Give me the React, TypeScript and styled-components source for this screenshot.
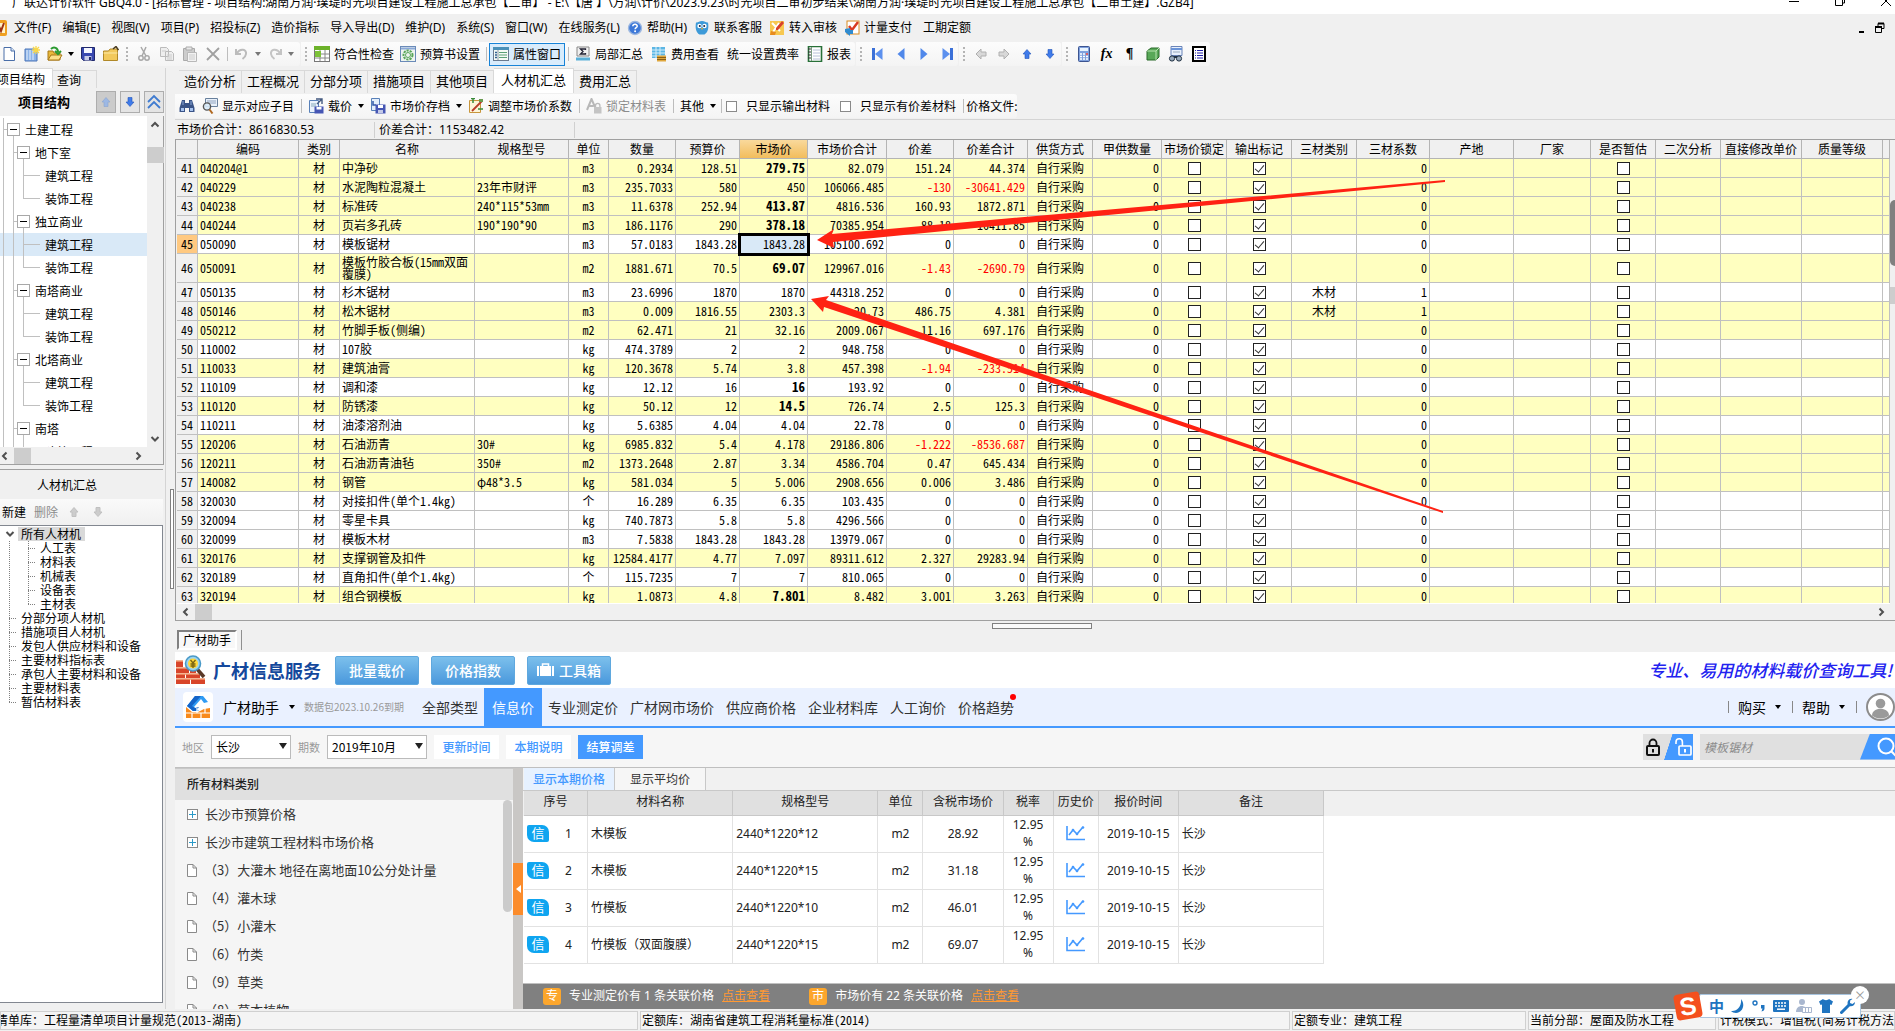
import React from 'react';
import styled, { createGlobalStyle, css } from 'styled-components';

const SANS = '"Noto Sans", "Noto Sans CJK SC", sans-serif';
const CJK = '"Noto Sans CJK SC", sans-serif';
const MONO = '"Noto Sans Mono CJK SC", "Noto Sans CJK SC", sans-serif';

const Global = createGlobalStyle`
  * { box-sizing: border-box; }
  html, body { margin: 0; height: 100%; overflow: hidden; }
  body { background: #f0f0f0; color: #000; font: 12px/16px ${CJK}; }
  button, input, select { font: inherit; color: inherit; margin: 0; padding: 0; border: 0; border-radius: 0; background: none; }
  button { white-space: nowrap; }
  ul { list-style: none; margin: 0; padding: 0; }
  svg { display: block; flex: none; }
`;

/* ---------- icons ---------- */
const Svg = ({ children, w = 16, h = 16, box }: { children: React.ReactNode; w?: number; h?: number; box?: string }) => (
  <svg width={w} height={h} viewBox={box || `0 0 ${w} ${h}`} aria-hidden="true">{children}</svg>
);

const I: Record<string, React.ReactNode> = {
  app: <Svg><rect x="0" y="0" width="15" height="16" rx="2" fill="#f0a020" /><path d="M2 3h11v10H2z" fill="#fff3c8" /><path d="M3 12l3-8 3 7 3-8" stroke="#a03010" strokeWidth="2" fill="none" /></Svg>,
  help: <Svg><circle cx="8" cy="8" r="6.5" fill="#3c78d8" stroke="#9db8e0" strokeWidth="1.4" /><path d="M5.8 6.2c.2-2.6 4.6-2.4 4.4 0-.1 1.400-2.100 1.500-2.100 3" stroke="#fff" strokeWidth="1.5" fill="none" /><circle cx="8.100" cy="11.300" r="1" fill="#fff" /></Svg>,
  owl: <Svg><path d="M2 2.500c2 .5 3-1.500 6-1.500s4 2 6 1.500c1 5 0 10-3.500 12h-5C2 12.500 1 8 2 2.500z" fill="#3d9ad8" /><circle cx="5.500" cy="6" r="2.200" fill="#fff" /><circle cx="10.500" cy="6" r="2.200" fill="#fff" /><circle cx="5.800" cy="6" r="1" fill="#124" /><circle cx="10.200" cy="6" r="1" fill="#124" /><path d="M7 8h2l-1 2z" fill="#f6b21b" /></Svg>,
  audit: <Svg><rect x="1" y="1" width="14" height="14" fill="#f7c850" /><path d="M3 3l8 8M10 3l-6 9" stroke="#fff" strokeWidth="2" /><path d="M13 1l2 2-6 7-2 0 0-2z" fill="#d8402a" /><path d="M2 11l5 1-1 3H1z" fill="#e88c20" /></Svg>,
  pay: <Svg><rect x="3" y="1" width="12" height="13" fill="#fff" stroke="#d98a20" /><path d="M5 6l3 4 6-8" stroke="#d83a20" strokeWidth="2.400" fill="none" /><path d="M1 9l5-1v2h3v4H6v2l-5-4z" fill="#2f8bd0" /></Svg>,
  newFile: <Svg><path d="M3 1.500h7l3.500 3.500v9.500H3z" fill="#fff" stroke="#4a6ea8" /><path d="M10 1.500V5h3.500" fill="#dbe8f8" stroke="#4a6ea8" /></Svg>,
  book: <Svg><path d="M1 3h12v12H1z" fill="#8db4e8" stroke="#4a74b8" /><path d="M3 4v10M6 4v10M9 4v10" stroke="#e8f1fc" /><path d="M12 0v8M8 4h8M9 1l6 6M15 1L9 7" stroke="#f8d84a" strokeWidth="1.300" /></Svg>,
  open: <Svg><path d="M1 14V5h5l1 2h6v7z" fill="#e8b83a" stroke="#a87818" /><path d="M1 14l3-5h11l-3 5z" fill="#fbe08a" stroke="#a87818" /><path d="M4 3c3-3 7-1 7 3M8 5l3 3 3-3" stroke="#2a9a30" strokeWidth="2" fill="none" /></Svg>,
  save: <Svg><path d="M1.500 1.500h13v13h-11l-2-2z" fill="#3848b0" stroke="#20286c" /><path d="M4 2h8v5H4z" fill="#f4f6ff" /><path d="M4.500 10h7v4.500h-7z" fill="#c8cce8" /><path d="M9 11h2v3H9z" fill="#20286c" /></Svg>,
  folderUp: <Svg><path d="M.5 14.500V5h5l1.500-2h7.500v11.500z" fill="#f2c95c" stroke="#b08828" /><path d="M.5 7h14" stroke="#fbe9a8" /><path d="M10 3l3-2.500 2.500 3.500" stroke="#4a3c20" strokeWidth="1.500" fill="none" /></Svg>,
  cut: <Svg><path d="M5 1l5 9M10 1L6 10" stroke="#a8a8a8" strokeWidth="1.500" /><circle cx="5" cy="12" r="2.200" fill="none" stroke="#a8a8a8" strokeWidth="1.500" /><circle cx="11" cy="12" r="2.200" fill="none" stroke="#a8a8a8" strokeWidth="1.500" /></Svg>,
  copy: <Svg><path d="M1.500 1.500h6l2 2v7h-8zM6.500 5.500h6l2 2v7h-8z" fill="#eee" stroke="#bbb" /><path d="M8 9h5M8 11h5M8 13h5M3 5h4" stroke="#ccc" /></Svg>,
  paste: <Svg><path d="M1.500 2.500h11v12h-11z" fill="#ccc" stroke="#aaa" /><path d="M4 1h6v3H4z" fill="#e8e8e8" stroke="#aaa" /><path d="M5.500 6.500h9v9h-9z" fill="#f2f2f2" stroke="#b8b8b8" /><path d="M7 9h6M7 11h6M7 13h6" stroke="#ccc" /></Svg>,
  del: <Svg><path d="M2 2l12 12M14 2L2 14" stroke="#a0a0a0" strokeWidth="1.800" /></Svg>,
  undo: <Svg><path d="M2 3v5h5M3 7c3-5 10-4 9 1-.3 2.500-2 4-3.500 5" stroke="#bcbcbc" strokeWidth="2" fill="none" /></Svg>,
  redo: <Svg><path d="M14 3v5H9M13 7c-3-5-10-4-9 1 .3 2.500 2 4 3.500 5" stroke="#c4c4c4" strokeWidth="2" fill="none" /></Svg>,
  check: <Svg><rect x="0.500" y="0.500" width="15" height="15" fill="#fff" stroke="#777" /><path d="M0 0h16v4H0z" fill="#6cb22a" /><path d="M1 8h14M1 12h14M6 4v11M11 4v11" stroke="#888" /><path d="M1 5h6v6H1z" fill="#7cc238" /></Svg>,
  gear: <Svg><rect x="0.500" y="0.500" width="15" height="15" fill="#eef4f0" stroke="#6a8ab8" /><path d="M1 2.500h14" stroke="#8aa8d8" strokeWidth="2" /><circle cx="8" cy="9" r="4.500" fill="none" stroke="#59a659" strokeWidth="2" strokeDasharray="2.200 1" /><circle cx="8" cy="9" r="2.500" fill="none" stroke="#59a659" /></Svg>,
  props: <Svg><rect x="0.500" y="1.500" width="15" height="13" fill="#f4faf6" stroke="#6a7a90" /><path d="M0 1h16v3H0z" fill="#4a90b8" /><path d="M2 6.500h2M2 9h2M2 11.500h2" stroke="#306090" strokeWidth="1.500" /><path d="M6 6.500h8M6 9h8M6 11.500h8" stroke="#5aa078" /><path d="M5 4v10" stroke="#8a98a8" /></Svg>,
  sigma: <Svg><path d="M2 1h12v9H2z" fill="#f0f0f0" stroke="#888" /><path d="M10.500 4V3h-5l2.500 2.500L5.500 8h5V7" stroke="#223" strokeWidth="1.300" fill="none" /><path d="M1 13h14" stroke="#5ab0d8" strokeWidth="3" /></Svg>,
  cost: <Svg><path d="M1 1h13v11H1z" fill="#5cb6e4" /><path d="M1 4h13M1 7h13M1 10h13M5 1v11M9 1v11" stroke="#d4eefa" /><path d="M6 9.500h9v6H6z" fill="#dfa63c" /><path d="M6 11.500h9M6 13.500h9" stroke="#8a6018" /></Svg>,
  report: <Svg><path d="M1.500.5h13v15h-13z" fill="#fff" stroke="#287038" strokeWidth="1.600" /><path d="M4.500 1v14" stroke="#7a9a80" /><path d="M6 4h7M6 7h7M6 10h7M6 13h7" stroke="#b8c0d8" /><path d="M1 3h3M1 6h3M1 9h3M1 12h3" stroke="#333" /></Svg>,
  first: <Svg><path d="M3.500 2v12" stroke="#3b70d8" strokeWidth="3" /><path d="M12.500 2L5 8l7.500 6z" fill="#5c90ee" /></Svg>,
  prev: <Svg><path d="M11.500 2L4.500 8l7 6z" fill="#5088ea" /></Svg>,
  next: <Svg><path d="M4.500 2l7 6-7 6z" fill="#5088ea" /></Svg>,
  last: <Svg><path d="M12.500 2v12" stroke="#3b70d8" strokeWidth="3" /><path d="M3.500 2L11 8l-7.500 6z" fill="#5c90ee" /></Svg>,
  left: <Svg><path d="M8 3v3h5v4H8v3L3 8z" fill="#d8d8d8" stroke="#b0b0b0" /></Svg>,
  right: <Svg><path d="M8 3v3H3v4h5v3l5-5z" fill="#d8d8d8" stroke="#b0b0b0" /></Svg>,
  up: <Svg><path d="M8 3.500l4 4.500H10v4.500H6V8H4z" fill="#3f7bea" stroke="#2456b8" strokeWidth="0.600" /></Svg>,
  down: <Svg><path d="M8 12.500L4 8h2V3.500h4V8h2z" fill="#3f7bea" stroke="#2456b8" strokeWidth="0.600" /></Svg>,
  upPale: <Svg><path d="M8 3.500l4 4.500H10v4.500H6V8H4z" fill="#9db8e4" stroke="#8aa4d0" strokeWidth="0.600" /></Svg>,
  upGray: <Svg><path d="M8 3.500l4 4.500H10v4.500H6V8H4z" fill="#ccc" stroke="#c0c0c0" /></Svg>,
  downGray: <Svg><path d="M8 12.500L4 8h2V3.500h4V8h2z" fill="#ccc" stroke="#c0c0c0" /></Svg>,
  dblUp: <Svg><path d="M2 8l6-6 6 6M2 14l6-6 6 6" stroke="#3f7bd0" strokeWidth="1.800" fill="none" /></Svg>,
  calc: <Svg><rect x="2.500" y="0.500" width="11" height="15" rx="1" fill="#7fa0dc" stroke="#3c5490" /><path d="M4 2h8v3H4z" fill="#e8f4ff" /><path d="M4 8h8M4 10.500h8M4 13h8" stroke="#fff" strokeWidth="1.500" strokeDasharray="2 1" /><path d="M10 8h2" stroke="#d33" strokeWidth="1.500" /></Svg>,
  cube: <Svg><path d="M2 5l4-3h8v9l-3 3H2z" fill="#58a858" stroke="#2a6a2a" /><path d="M2 5h9l3-3M11 5v9" stroke="#b8e4b0" fill="none" /></Svg>,
  find: <Svg><path d="M3 .5h11v9H3z" fill="#e8f0fc" stroke="#6a84b8" /><path d="M3 3h11" stroke="#6a94d8" strokeWidth="2" /><path d="M5 6h7" stroke="#9ab" /><circle cx="4" cy="12.500" r="2.600" fill="#9ab" stroke="#234" /><circle cx="11" cy="12.500" r="2.600" fill="#9ab" stroke="#234" /><path d="M6 11h3" stroke="#234" strokeWidth="2" /></Svg>,
  list: <Svg><rect x="2" y="1" width="12" height="14" fill="#fff" stroke="#000" strokeWidth="2" /><path d="M4 4.500h1M4 7h1M4 9.500h1M4 12h1" stroke="#22a" /><path d="M6 4.500h6M6 7h6M6 9.500h6M6 12h6" stroke="#22a" /></Svg>,
  binoc: <Svg><path d="M3 2h3v3h4V2h3l2.500 8v4H10v-4H6v4H.500v-4z" fill="#3a5488" /><path d="M2 10h3v3H2zM11 10h3v3h-3z" fill="#a8c4f0" /><path d="M4 3v4M12 3v4" stroke="#8aa8d8" /></Svg>,
  magnify: <Svg><path d="M3.500 .5h12v8h-12z" fill="#e8f0fa" stroke="#68809c" /><path d="M5 3h9M5 5h9" stroke="#90a4c0" /><circle cx="5" cy="8.500" r="3.600" fill="#d8eaf8" fillOpacity=".9" stroke="#555" strokeWidth="1.400" /><path d="M7.500 11.500l3 4" stroke="#b06820" strokeWidth="2" /></Svg>,
  load: <Svg><path d="M1.500 2.500h9v12h-9z" fill="#eaf2fc" stroke="#5880b8" /><path d="M3 6h5M3 8h5" stroke="#8ab" /><path d="M8 1h6v5M14 1L9 6" stroke="#445a80" strokeWidth="1.400" fill="none" /><path d="M6.500 8.500h9v7h-9z" fill="#4656b4" /><path d="M8.500 9h5v2.500h-5z" fill="#fff" /></Svg>,
  archive: <Svg><path d="M1.500.5h8v12h-8z" fill="#e4eefa" stroke="#5880b8" /><path d="M3 3v4h3" stroke="#3058a8" strokeWidth="1.500" fill="none" /><path d="M5.500 6.500h10v9h-10z" fill="#4656b4" /><path d="M8 7h5v3H8z" fill="#fff" /><path d="M8 12h5v3H8z" fill="#c4cae8" /></Svg>,
  adjust: <Svg><path d="M1.500 2.500h11v12h-11z" fill="#fdf4d8" stroke="#c8963c" /><path d="M3 .5h4M5 0v5M10 11h5" stroke="#3a8a3a" strokeWidth="1.500" /><path d="M4 13L14 3" stroke="#b83a28" strokeWidth="1.800" /><path d="M11 1h4v3h-4z" fill="#6a9a50" /></Svg>,
  lockA: <Svg><path d="M1 12L5.500 1 9 9M2.500 8h5" stroke="#b8b8b8" strokeWidth="2" fill="none" /><rect x="8" y="9" width="7.500" height="6.500" fill="#c4c4c4" /><path d="M9.500 9V7.500a2.200 2.200 0 0 1 4.400 0V9" stroke="#bbb" strokeWidth="1.300" fill="none" /></Svg>,
  file: <Svg w={10} h={13}><path d="M.5.500h5.500l3.500 3.500v8.500h-9zM6 .5V4h3.500" fill="#fff" stroke="#8a8a8a" /></Svg>,
  chart: <Svg w={20} h={16}><path d="M1 1v13.500h18" stroke="#4499ff" strokeWidth="1.600" fill="none" /><path d="M3 10l4-5 4 4 6-7" stroke="#4499ff" strokeWidth="1.600" fill="none" /><circle cx="7" cy="5" r="1.300" fill="#4499ff" /><circle cx="11" cy="9" r="1.300" fill="#4499ff" /><circle cx="17" cy="2.500" r="1.300" fill="#4499ff" /></Svg>,
  brick: (
    <Svg w={30} h={30}>
      <path d="M0 6h7v6H0zM0 13h13v5H0zM0 19h9v4H0zM10 19h14v4H10zM0 24h14v5H0zM15 24h14v5H15zM14 14h6v4h-6z" fill="#d8452a" />
      <path d="M0 6h7M0 13h13M0 19h24M0 24h29" stroke="#f29a70" strokeWidth="1.500" />
      <path d="M21 14l7 8" stroke="#5a3a28" strokeWidth="3.500" />
      <circle cx="17" cy="8.500" r="7.500" fill="#9cd4f0" stroke="#4a9ac8" strokeWidth="1.600" />
      <circle cx="17" cy="8.500" r="5" fill="#ffd83c" />
      <path d="M14.500 5l2.500 3 2.500-3M17 8v5M14.500 9h5M14.500 11h5" stroke="#7a6410" strokeWidth="1.300" fill="none" />
    </Svg>
  ),
  gcLogo: (
    <Svg w={30} h={30}>
      <rect width="30" height="30" rx="4" fill="#fff" />
      <path d="M12 4h8l5 6-4 1-3-4-7 8 5 4h-6l-6-5z" fill="#2f9bf4" />
      <path d="M12 4l-8 10 6 5h3l3-4-4 1-3-2 9-10z" fill="#1464c8" />
      <path d="M3 15l6 5h6l6-3 6-1v10H3z" fill="#f88a1c" />
      <path d="M3 21h24M9 21v5M18 21v5M14 16v5M22 16v5" stroke="#fff" strokeWidth="1.200" />
    </Svg>
  ),
  bag: <Svg w={17} h={14}><path d="M0 3h2v10H0zM3 3h11v10H3zM15 3h2v10h-2z" fill="#fff" /><path d="M5.500 3V1h6v2" stroke="#fff" strokeWidth="1.500" fill="none" /></Svg>,
  avatar: <Svg w={30} h={28} box="0 0 30 28"><ellipse cx="14.500" cy="14" rx="13.500" ry="13" fill="#fff" stroke="#8c8c8c" strokeWidth="2" /><circle cx="14.500" cy="10.500" r="4.800" fill="#9a9a9a" /><path d="M6 22.500c0-9 17-9 17 0-4.500 4-12.500 4-17 0z" fill="#9a9a9a" /></Svg>,
  lock: <Svg w={14} h={18}><rect x="1" y="8" width="12" height="9" rx="1" fill="none" stroke="#111" strokeWidth="2" /><path d="M3.500 8V5a3.500 3.500 0 0 1 7 0v3" stroke="#111" strokeWidth="1.800" fill="none" /><path d="M7 11v3.500" stroke="#111" strokeWidth="2" /></Svg>,
  unlock: <Svg w={17} h={18}><rect x="4" y="8" width="12" height="9" rx="1" fill="none" stroke="#fff" strokeWidth="1.700" /><path d="M1 6V4a3.200 3.200 0 0 1 6.400 0v4" stroke="#fff" strokeWidth="1.600" fill="none" /><path d="M10 11v3.500" stroke="#fff" strokeWidth="2" /></Svg>,
  search: <Svg w={20} h={20}><circle cx="9" cy="9" r="7.500" stroke="#fff" strokeWidth="2" fill="none" /><path d="M14.500 14.500L19 19" stroke="#fff" strokeWidth="2.200" /></Svg>,
  moon: <Svg w={14} h={14}><path d="M10 0c5 6 1 14-5 14-2 0-4-.8-5-2 6 1 11-5 10-12z" fill="#1f74c0" /></Svg>,
  punct: <Svg w={14} h={14}><circle cx="3" cy="4" r="2" fill="none" stroke="#1f74c0" strokeWidth="1.400" /><path d="M9 6h3.500v3.500c0 1.500-1 2.500-3 3l1-3H9z" fill="#1f74c0" /></Svg>,
  kbd: <Svg w={16} h={12}><rect width="16" height="12" rx="1" fill="#1f74c0" /><path d="M2 3h12M2 6h12" stroke="#fff" strokeWidth="1.500" strokeDasharray="2 1" /><path d="M4 9.200h8" stroke="#fff" strokeWidth="1.500" /></Svg>,
  person: <Svg w={16} h={14}><circle cx="6" cy="3" r="3" fill="#a9b7cf" /><path d="M0 13c0-8 11-8 12 0z" fill="#a9b7cf" /><path d="M6.500 8.500h9v5h-9z" fill="#fff" stroke="#a9b7cf" /><path d="M9.500 9v4M12.500 9v4" stroke="#a9b7cf" /></Svg>,
  shirt: <Svg w={14} h={14}><path d="M4 0c1 1.500 5 1.500 6 0l4 2.500-1.500 3.500L11 5.500V14H3V5.500L1.500 6 0 2.500z" fill="#1f74c0" /></Svg>,
  wrench: <Svg w={16} h={16}><path d="M1.500 14.500L9 7" stroke="#1f74c0" strokeWidth="3" strokeLinecap="round" /><path d="M12.500 1C9 0 6.500 4 8 7c2 2.500 7 1.500 7-3l-2.500 2-2.500-1 .2-2.500z" fill="#1f74c0" /></Svg>,
};

const Chevron = ({ dir }: { dir: 'up' | 'down' | 'left' | 'right' }) => {
  const d = { up: 'M1.500 7.500L5 4l3.500 3.500', down: 'M1.500 3L5 6.500 8.500 3', left: 'M6.500 1.500L3 5l3.500 3.500', right: 'M3.500 1.500L7 5 3.500 8.500' }[dir];
  return <Svg w={10} h={10}><path d={d} stroke="#505050" strokeWidth="2" fill="none" /></Svg>;
};

/* ---------- window chrome ---------- */
const Page = styled.div`
  position: relative;
  height: 100vh;
  min-height: 700px;
  display: flex;
  flex-direction: column;
  overflow: hidden;
`;
const TitleBar = styled.header`
  height: 14px;
  display: flex;
  align-items: flex-end;
  background: #fff;
  overflow: hidden;
  font-family: ${SANS};
  white-space: nowrap;
`;
const TitleText = styled.h1`
  flex: 1;
  margin: 0 0 0 12px;
  font-size: 12px;
  font-weight: 400;
  line-height: 22px;
`;
const WinButtons = styled.div`
  display: flex;
  gap: 36px;
  height: 14px;
  padding-right: 4px;
`;
const WinButton = styled.button`height: 14px;`;

const MenuBar = styled.nav`
  height: 28px;
  display: flex;
  align-items: center;
  gap: 11px;
  overflow: hidden;
  font-family: ${SANS};
`;
const MenuItem = styled.button<{ $gap?: boolean }>`
  display: flex;
  align-items: center;
  gap: 4px;
  margin-left: ${(p) => (p.$gap ? '-4px' : '0')};
`;
const MenuLogo = styled.span`
  width: 8px;
  margin-right: -5px;
  display: flex;
  justify-content: flex-end;
  overflow: hidden;
`;
const Spacer = styled.span`flex: 1;`;

const Toolbar = styled.div`
  display: flex;
  height: 26px;
  overflow: hidden;
`;
const ToolGroup = styled.div<{ $bleed?: boolean }>`
  flex: none;
  display: flex;
  align-items: center;
  height: 24px;
  margin-right: 1px;
  margin-left: ${(p) => (p.$bleed ? '-3px' : '0')};
  padding-right: ${(p) => (p.$bleed ? '4px' : '0')};
  background: linear-gradient(#fcfcfc, #f4f4f4);
  border-radius: 0 3px 3px 0;
`;
const IconBtn = styled.button`
  width: 23px;
  height: 22px;
  display: grid;
  place-items: center;
`;
const LabelBtn = styled.button<{ $tight?: boolean; $on?: boolean; $dim?: boolean }>`
  display: flex;
  align-items: center;
  gap: 4px;
  height: 23px;
  padding: 0 ${(p) => (p.$tight ? 3 : 4)}px;
  color: ${(p) => (p.$dim ? '#8c8c8c' : '#000')};
  ${(p) => p.$on && css`
    background: #d9ecfc;
    border: 1px solid #1883d7;
  `}
`;
const Grip = styled.span`
  width: 10px;
  height: 14px;
  background: radial-gradient(circle at 1px 1px, #b4b4b4 1px, transparent 1px) 4px 0 / 20px 4px repeat-y;
`;
const Sep = styled.span`
  width: 6px;
  height: 14px;
  background: linear-gradient(#bdbdbd, #bdbdbd) center / 1px 100% no-repeat;
`;
const Caret = styled.span<{ $dim?: boolean }>`
  width: 10px;
  display: grid;
  place-items: center;
  &::after {
    content: '';
    border: 3px solid transparent;
    border-top: 4px solid ${(p) => (p.$dim ? '#777' : '#000')};
    border-bottom: 0;
  }
`;
const Glyph = styled.span<{ $italic?: boolean }>`
  font: ${(p) => (p.$italic ? 'italic' : 'normal')} bold 14px/18px "Liberation Serif", serif;
`;

const Workspace = styled.div`
  flex: 1;
  min-height: 0;
  display: flex;
`;

/* ---------- left column ---------- */
const Side = styled.aside`
  flex: 0 0 166px;
  display: grid;
  grid-template-rows: auto auto minmax(0, 353fr) minmax(0, 540fr);
  border-right: 1px solid #d4d4d4;
`;
const SideTabs = styled.div`
  display: flex;
  align-items: flex-end;
  height: 20px;
  overflow: hidden;
`;
const SideTab = styled.button<{ $on?: boolean }>`
  height: ${(p) => (p.$on ? 20 : 18)}px;
  width: ${(p) => (p.$on ? 53 : 44)}px;
  display: flex;
  align-items: center;
  justify-content: ${(p) => (p.$on ? 'flex-end' : 'flex-start')};
  padding: ${(p) => (p.$on ? '0 7px 0 0' : '0 0 0 4px')};
  background: ${(p) => (p.$on ? '#fff' : '#f0f0f0')};
  border: 1px solid #d9d9d9;
  border-bottom: 0;
  border-left: 0;
`;
const SideHead = styled.div`
  height: 28px;
  display: flex;
  align-items: center;
  gap: 4px;
  padding-right: 1px;
`;
const SideTitle = styled.h2`
  flex: 1;
  margin: 0;
  padding-left: 18px;
  font-size: 13px;
  font-weight: 700;
`;
const SquareBtn = styled.button<{ $off?: boolean }>`
  width: 20px;
  height: 22px;
  display: grid;
  place-items: center;
  border: 1px solid #adadad;
  background: ${(p) => (p.$off ? '#cbcbcb' : '#e4e4e4')};
`;
const TreePane = styled.div`
  min-height: 0;
  display: grid;
  grid-template: minmax(0, 1fr) 17px / 1fr 16px;
  background: #f0f0f0;
  border-right: 1px solid #a0a0a0;
  border-bottom: 1px solid #a0a0a0;
  margin: 0 1px 4px 0;
`;
const Tree = styled.ul`
  overflow: hidden;
  background: #fff;
  padding-top: 2px;
`;
const TreeRow = styled.li<{ $on?: boolean }>`
  height: 23px;
  display: flex;
  align-items: center;
  padding-left: 3px;
  background: ${(p) => (p.$on ? '#d9e9f7' : 'transparent')};
`;
const Guide = styled.span<{ $w: number; $h?: boolean; $half?: boolean }>`
  align-self: stretch;
  width: ${(p) => p.$w}px;
  background:
    linear-gradient(#c0c0c0, #c0c0c0) 0 0 / 1px ${(p) => (p.$half ? '50%' : '100%')} no-repeat,
    linear-gradient(#c0c0c0, #c0c0c0) 0 50% / ${(p) => (p.$h ? '100%' : '0')} 1px no-repeat;
`;
const Fold = styled.button`
  position: relative;
  width: 13px;
  height: 13px;
  border: 1px solid #a8a8a8;
  background: linear-gradient(#000, #000) center / 7px 1px no-repeat #fff;
  &::after {
    content: '';
    position: absolute;
    left: 5px;
    top: 12px;
    height: 5px;
    border-left: 1px solid #c0c0c0;
  }
`;
const TreeLabel = styled.span`
  padding-left: 5px;
  white-space: nowrap;
`;
const VScroll = styled.div`
  display: flex;
  flex-direction: column;
  justify-content: space-between;
  align-items: center;
  padding: 3px 0;
`;
const HScroll = styled.div`
  display: flex;
  align-items: center;
  justify-content: space-between;
`;
const ScrollEnd = styled.span<{ $col?: boolean }>`
  display: flex;
  flex-direction: ${(p) => (p.$col ? 'column' : 'row')};
  align-items: center;
  gap: ${(p) => (p.$col ? '18px' : '4px')};
`;
const Thumb = styled.span`
  width: 17px;
  height: 16px;
  background: #cdcdcd;
`;

const Lower = styled.section`
  min-height: 0;
  display: flex;
  flex-direction: column;
  border-top: 1px solid #a0a0a0;
  margin-right: 2px;
`;
const LowerTitle = styled.h2`
  margin: 0;
  height: 29px;
  line-height: 30px;
  padding-right: 29px;
  text-align: center;
  font-size: 12px;
  font-weight: 400;
`;
const LowerTools = styled.div`
  height: 26px;
  display: flex;
  align-items: center;
  gap: 8px;
  padding-left: 2px;
  background: linear-gradient(#fafafa, #f0f0f0);
`;
const TextBtn = styled.button<{ $dim?: boolean }>`
  color: ${(p) => (p.$dim ? '#8c8c8c' : '#000')};
`;
const LowerTree = styled.ul`
  flex: 1;
  min-height: 0;
  margin-bottom: 6px;
  padding-top: 1px;
  background: #fff;
  border: 1px solid #828790;
  border-left: 0;
  line-height: 14px;
`;
const LowerRow = styled.li`
  height: 14px;
  display: flex;
  align-items: center;
  padding-left: 9px;
`;
const Dots = styled.span<{ $w: number; $h?: boolean; $half?: boolean; $none?: boolean }>`
  align-self: stretch;
  width: ${(p) => p.$w}px;
  background:
    repeating-linear-gradient(#808080 0 1px, transparent 1px 2px) 0 0 / ${(p) => (p.$none ? 0 : 1)}px ${(p) => (p.$half ? '50%' : '100%')} no-repeat,
    repeating-linear-gradient(90deg, #808080 0 1px, transparent 1px 2px) 0 50% / ${(p) => (p.$h ? '8px' : '0')} 1px no-repeat;
`;
const LowerLabel = styled.span<{ $on?: boolean }>`
  padding: 0 4px 0 3px;
  white-space: nowrap;
  background: ${(p) => (p.$on ? '#d9d9d9' : 'transparent')};
`;
const ChevronSlot = styled.span`
  width: 8px;
  margin-left: -4px;
  margin-right: 5px;
`;

const Splitter = styled.div`
  flex: 0 0 9px;
  display: flex;
  justify-content: flex-end;
  padding: 0 1px;
  align-items: center;
`;
const VGrip = styled.span`
  width: 4px;
  height: 100px;
  border: 1px solid #808080;
  background: #fff;
`;

/* ---------- main column ---------- */
const Main = styled.main`
  position: relative;
  flex: 1;
  min-width: 0;
  display: grid;
  grid-template-columns: minmax(0, 1fr);
  grid-template-rows: 25px 27px 19px minmax(0, 482fr) 9px 22px minmax(0, 357fr);
`;
const Tabs = styled.div`
  display: flex;
  align-items: flex-end;
  padding-left: 4px;
`;
const Tab = styled.button<{ $on?: boolean }>`
  height: ${(p) => (p.$on ? 25 : 23)}px;
  padding: 0 ${(p) => (p.$on ? 7 : 5)}px 2px;
  font-size: 13px;
  background: ${(p) => (p.$on ? '#fff' : '#f0f0f0')};
  border: 1px solid #d9d9d9;
  border-width: 1px 1px 0 0;
`;
const SubBar = styled.div`
  display: flex;
  align-items: center;
  border-bottom: 1px solid #d4d4d4;
`;
const CheckLabel = styled.label`
  display: flex;
  align-items: center;
  gap: 9px;
  padding: 0 4px 0 2px;
  white-space: nowrap;
  & + & { padding-left: 6px; }
`;
const Tick = styled.input.attrs({ type: 'checkbox' })<{ $dark?: boolean }>`
  appearance: none;
  display: block;
  position: relative;
  flex: none;
  width: ${(p) => (p.$dark ? 13 : 11)}px;
  height: ${(p) => (p.$dark ? 13 : 11)}px;
  margin: 0 auto;
  border: 1px solid ${(p) => (p.$dark ? '#222' : '#8a8a8a')};
  background: #fff;
  &:checked::after {
    content: '';
    position: absolute;
    left: 3px;
    top: 0;
    width: 4px;
    height: 8px;
    border: solid #333;
    border-width: 0 1px 1px 0;
    transform: rotate(40deg);
  }
`;
const Summary = styled.div`
  display: flex;
  align-items: center;
  font-family: ${SANS};
`;
const SumCell = styled.span`
  flex: 0 0 200px;
  padding-left: 4px;
  line-height: 16px;
  border-right: 1px solid #d0d0d0;
  &:first-child { padding-left: 2px; }
`;

const GridPane = styled.div`
  position: relative;
  min-height: 0;
  display: grid;
  grid-template: minmax(0, 1fr) 17px / minmax(0, 1fr) 5px;
  border: 1px solid #a0a0a0;
  border-right: 0;
  padding-left: 1px;
`;
const GridView = styled.div`
  overflow: hidden;
  background: #f0f0f0;
`;
const Grid = styled.table`
  width: 100%;
  min-width: 1700px;
  table-layout: fixed;
  border-collapse: separate;
  border-spacing: 0;
  font-family: ${MONO};
`;
const Th = styled.th<{ $on?: boolean }>`
  height: 19px;
  padding: 0;
  font-weight: 400;
  line-height: 18px;
  white-space: nowrap;
  border: solid #b4b4b4;
  border-width: 0 1px 1px 0;
  background: ${(p) => (p.$on ? 'linear-gradient(#f9d99c, #f2bd5c)' : '#f0f0f0')};
`;
const Td = styled.td<{ $a?: 'c' | 'r'; $hl?: boolean; $neg?: boolean; $bold?: boolean; $sel?: boolean; $y?: boolean }>`
  height: 19px;
  padding: 0 2px;
  line-height: 12px;
  text-align: ${(p) => (p.$a === 'c' ? 'center' : p.$a === 'r' ? 'right' : 'left')};
  border: solid #c0c0c0;
  border-width: 0 1px 1px 0;
  background: ${(p) => (p.$y ? '#ffffc0' : '#fff')};
  ${(p) => p.$neg && css`color: #f00;`}
  ${(p) => p.$bold && css`font-weight: 700; font-size: 13px;`}
  ${(p) => p.$sel && css`
    position: relative;
    background: #d9e9f7;
    outline: 3px solid #000;
    outline-offset: -1px;
  `}
`;
const RowNo = styled.th<{ $on?: boolean }>`
  padding: 0 4px 0 0;
  font-weight: 400;
  text-align: right;
  border: solid #c0c0c0;
  border-width: 0 1px 1px 0;
  background: ${(p) => (p.$on ? '#ffc981' : '#f0f0f0')};
`;
const GridH = styled(HScroll)`
  border-top: 1px solid #fff;
  padding: 0 4px;
`;
const GridV = styled.div`
  background: #f0f0f0;
  padding-top: 147px;
`;
const GridThumb = styled.div`
  height: 17px;
  background: #cdcdcd;
`;
const EdgeHandle = styled.div`
  position: absolute;
  right: 0;
  top: 132px;
  width: 5px;
  height: 66px;
  border-radius: 5px 0 0 5px;
  background: #808080;
`;
const Marks = styled.svg`
  position: absolute;
  left: 0;
  top: 0;
  z-index: 3;
  pointer-events: none;
`;
const HGripRow = styled.div`
  display: flex;
  justify-content: center;
  padding: 2px 0;
`;
const HGrip = styled.span`
  width: 100px;
  height: 6px;
  margin-left: 14px;
  border: 1px solid #808080;
  background: #fafafa;
`;
const DockTabs = styled.div`
  display: flex;
  align-items: flex-start;
  gap: 4px;
  padding-left: 2px;
`;
const DockTab = styled.button`
  height: 20px;
  width: 60px;
  border: 2px solid;
  border-color: #808080 #fff #fff #808080;
  background: #f8f8f8;
`;
const DockEdge = styled.span`
  width: 1px;
  height: 20px;
  background: #909090;
`;

/* ---------- price service ---------- */
const Service = styled.section`
  min-height: 0;
  display: flex;
  flex-direction: column;
  background: #fff;
`;
const Banner = styled.div`
  flex: 0 0 36px;
  display: flex;
  align-items: center;
  padding-left: 1px;
  gap: 12px;
  overflow: hidden;
`;
const Brand = styled.h2`
  margin: 0 2px 0 -5px;
  font-size: 18px;
  line-height: 24px;
  font-weight: 700;
  color: #14489c;
  white-space: nowrap;
`;
const BigBtn = styled.button`
  width: 84px;
  height: 29px;
  display: flex;
  align-items: center;
  justify-content: center;
  gap: 5px;
  color: #fff;
  font-size: 14px;
  font-weight: 500;
  border: 1px solid #5fa8de;
  border-radius: 2px;
  background: linear-gradient(#7cc0ec, #4a98dc);
`;
const Slogan = styled.p`
  margin: 0 0 0 auto;
  padding-right: 3px;
  color: #2222f0;
  font-size: 17px;
  font-style: italic;
  font-weight: 500;
  white-space: nowrap;
`;
const NavBar = styled.nav`
  flex: 0 0 40px;
  display: flex;
  align-items: center;
  padding-left: 8px;
  font-size: 14px;
  background: #eaf1ff;
  border-bottom: 2px solid #4499ff;
`;
const Product = styled.button`
  display: flex;
  align-items: center;
  gap: 8px;
  padding: 0 7px 0 10px;
`;
const Expiry = styled.span`
  padding-right: 12px;
  font-size: 10px;
  color: #999;
  white-space: nowrap;
`;
const NavItem = styled.button<{ $on?: boolean }>`
  position: relative;
  align-self: stretch;
  padding: 0 ${(p) => (p.$on ? 8 : 6)}px;
  color: ${(p) => (p.$on ? '#fff' : '#333')};
  background: ${(p) => (p.$on ? '#4499ff' : 'transparent')};
`;
const RedDot = styled.span`
  position: absolute;
  right: 4px;
  top: 6px;
  width: 6px;
  height: 6px;
  border-radius: 50%;
  background: #f00;
`;
const NavRight = styled.div`
  margin-left: auto;
  display: flex;
  align-items: center;
`;
const NavDrop = styled.button`
  display: flex;
  align-items: center;
  gap: 7px;
  height: 12px;
  padding: 0 9px;
  border-left: 1px solid #888;
`;
const AvatarBtn = styled.button`
  width: 39px;
  height: 12px;
  padding-left: 9px;
  display: flex;
  align-items: center;
  border-left: 1px solid #888;
  & svg { overflow: visible; }
`;
const FilterBar = styled.div`
  flex: 0 0 39px;
  display: flex;
  align-items: center;
  gap: 7px;
  padding: 0 0 2px 7px;
  background: #f6f6f6;
`;
const FieldLabel = styled.label`
  font-size: 11px;
  color: #999;
`;
const SelectBox = styled.span<{ $w: number }>`
  position: relative;
  width: ${(p) => p.$w}px;
  &::after {
    content: '';
    position: absolute;
    right: 4px;
    top: 8px;
    border: 4px solid transparent;
    border-top: 6px solid #222;
    border-bottom: 0;
    pointer-events: none;
  }
`;
const Select = styled.select`
  appearance: none;
  display: block;
  width: 100%;
  height: 24px;
  padding-left: 4px;
  border: 1px solid #bbb;
  background: #fff;
`;
const FlatBtn = styled.button<{ $on?: boolean }>`
  width: 65px;
  height: 24px;
  font-weight: 500;
  color: ${(p) => (p.$on ? '#fff' : '#4499ff')};
  background: ${(p) => (p.$on ? '#4499ff' : '#fff')};
`;
const LockToggle = styled.button`
  margin-left: auto;
  width: 50px;
  height: 26px;
  display: flex;
  align-items: center;
  justify-content: space-between;
  padding: 0 1px 0 3px;
  background: linear-gradient(108deg, #e0e0e0 50%, #4499ff 51%);
`;
const SearchBox = styled.form`
  display: flex;
  width: 195px;
  height: 26px;
  background: #e0e0e0;
  overflow: hidden;
`;
const SearchInput = styled.input`
  flex: 1;
  min-width: 0;
  padding-left: 4px;
  font-style: italic;
  outline: 0;
  &::placeholder { color: #8c8c8c; opacity: 1; }
`;
const SearchBtn = styled.button`
  width: 35px;
  padding-left: 17px;
  background: #4499ff;
  clip-path: polygon(10px 0, 100% 0, 100% 100%, 0 100%);
`;
const Split = styled.div`
  flex: 1;
  min-height: 0;
  display: flex;
  border-top: 1px solid #bfbfbf;
`;
const Cats = styled.div`
  flex: 0 0 338px;
  display: flex;
  flex-direction: column;
  background: #f5f5f5;
`;
const CatHead = styled.h3`
  margin: 0;
  flex: 0 0 32px;
  padding-left: 12px;
  line-height: 30px;
  font-size: 12px;
  font-weight: 500;
  color: #222;
  background: #e0e0e0;
  border-top: 1px solid #c8c8c8;
`;
const CatBody = styled.div`
  flex: 1;
  min-height: 0;
  display: flex;
  justify-content: space-between;
  overflow: hidden;
`;
const CatRow = styled.li`
  height: 28px;
  display: flex;
  align-items: center;
  padding-left: 12px;
  font-size: 13px;
  line-height: 28px;
  color: #333;
  white-space: nowrap;
`;
const Plus = styled.button`
  width: 11px;
  height: 11px;
  border: 1px solid #8a8a8a;
  background:
    linear-gradient(#2a9ac8, #2a9ac8) center / 7px 1px no-repeat,
    linear-gradient(#2a9ac8, #2a9ac8) center / 1px 7px no-repeat,
    #fff;
`;
const CatText = styled.span`margin-left: 7px;`;
const CatThumb = styled.span`
  width: 9px;
  height: 112px;
  margin-right: 1px;
  border-radius: 5px;
  background: #cbcbcb;
`;
const MidBar = styled.div`
  flex: 0 0 10px;
  display: flex;
  align-items: center;
  background: #c9c7c5;
`;
const Collapse = styled.button`
  width: 10px;
  height: 52px;
  display: grid;
  place-items: center;
  background: #fb8c2c;
  &::after {
    content: '';
    border: 4px solid transparent;
    border-right: 5px solid #fff;
    border-left: 0;
  }
`;
const Results = styled.div`
  flex: 1;
  min-width: 0;
  display: flex;
  flex-direction: column;
`;
const ResultTabs = styled.div`
  display: flex;
  flex: 0 0 23px;
  padding-left: 1px;
  background: #f1f1f1;
  border-bottom: 1px solid #c8c8c8;
`;
const ResultTab = styled.button<{ $on?: boolean }>`
  width: 91px;
  border-right: 1px solid #c8c8c8;
  font-weight: ${(p) => (p.$on ? 500 : 400)};
  color: ${(p) => (p.$on ? '#4499ff' : '#333')};
  background: ${(p) => (p.$on ? '#e6f1ff' : '#f6f6f6')};
`;
const ResultBody = styled.div`
  flex: 1;
  min-height: 0;
  background: linear-gradient(#f0f0f0 25px, #fff 25px);
`;
const PriceTable = styled.table`
  width: 800px;
  margin-left: 1px;
  table-layout: fixed;
  border-collapse: separate;
  border-spacing: 0;
  font-family: ${SANS};
  color: #222;
`;
const PTh = styled.th`
  height: 25px;
  padding: 0 0 2px;
  font-weight: 400;
  background: #e0e0e0;
  border: solid #c8c8c8;
  border-width: 0 1px 1px 0;
`;
const PTd = styled.td<{ $left?: boolean }>`
  height: 37px;
  padding: 0 3px 2px;
  line-height: 17px;
  text-align: ${(p) => (p.$left ? 'left' : 'center')};
  background: #fff;
  border: solid #e2e2e2;
  border-width: 0 1px 1px 0;
  word-break: break-all;
`;
const NumCell = styled.div`
  display: flex;
  align-items: center;
  gap: 16px;
`;
const Badge = styled.span<{ $orange?: boolean }>`
  width: ${(p) => (p.$orange ? 18 : 22)}px;
  height: 17px;
  line-height: 16px;
  text-align: center;
  color: #fff;
  font-size: ${(p) => (p.$orange ? 12 : 13)}px;
  background: ${(p) => (p.$orange ? '#fca62c' : '#0fa5f0')};
  border-radius: ${(p) => (p.$orange ? '3px' : '2px 7px 2px 7px')};
`;
const IconBox = styled.button`
  display: block;
  margin: 0 auto;
`;
const Related = styled.div`
  flex: 0 0 26px;
  display: flex;
  align-items: center;
  gap: 8px;
  padding: 0 0 1px 20px;
  font-family: ${SANS};
  color: #fff;
  background: #808080;
  border-top: 1px solid #c0c0c0;
`;
const More = styled.a`
  color: #ff9933;
  margin-right: 31px;
  text-decoration: underline;
`;

/* ---------- status bar and input-method strip ---------- */
const Status = styled.footer`
  height: 22px;
  display: grid;
  grid-template-columns: 638fr 650fr 234fr 188fr 177fr;
  gap: 2px;
  padding: 2px 0 1px;
  font-family: ${MONO};
  white-space: nowrap;
`;
const StatusCell = styled.span`
  min-width: 0;
  overflow: hidden;
  padding-left: 1px;
  line-height: 16px;
  border: 1px solid #d0d0d0;
  background: #f4f4f4;
`;
const Bleed = styled.span`margin-left: -6px;`;
const Ime = styled.div`
  position: absolute;
  right: 34px;
  bottom: 13px;
  z-index: 4;
  width: 162px;
  height: 24px;
  display: flex;
  align-items: center;
  justify-content: space-between;
  padding: 0 4px 0 9px;
  background: #fff;
  border: 1px solid #a8c4de;
  border-radius: 2px;
`;
const ImeLogo = styled.span`
  position: absolute;
  left: -25px;
  top: -2px;
  width: 26px;
  height: 26px;
  border-radius: 4px;
  background: #f4501e;
  color: #fff;
  font: bold 25px/26px "Liberation Sans", sans-serif;
  text-align: center;
  transform: rotate(-10deg);
`;
const ImeMode = styled.span`
  color: #1f74c0;
  font-size: 15px;
  font-weight: 700;
`;
const ImeClose = styled.button`
  position: absolute;
  right: -9px;
  top: -9px;
  z-index: -1;
  width: 18px;
  height: 18px;
  border-radius: 50%;
  background: #fff;
  color: #999;
  line-height: 16px;
`;

/* ---------- data ---------- */
type Row = [number, string, string, string, string, string, string, string, string, string, string];
const rows: Row[] = [
  [41, '040204@1', '中净砂', '', 'm3', '0.2934', '128.51', '279.75', '82.079', '151.24', '44.374'],
  [42, '040229', '水泥陶粒混凝土', '23年市财评', 'm3', '235.7033', '580', '450', '106066.485', '-130', '-30641.429'],
  [43, '040238', '标准砖', '240*115*53mm', 'm3', '11.6378', '252.94', '413.87', '4816.536', '160.93', '1872.871'],
  [44, '040244', '页岩多孔砖', '190*190*90', 'm3', '186.1176', '290', '378.18', '70385.954', '88.18', '16411.85'],
  [45, '050090', '模板锯材', '', 'm3', '57.0183', '1843.28', '1843.28', '105100.692', '0', '0'],
  [46, '050091', '模板竹胶合板(15mm双面覆膜)', '', 'm2', '1881.671', '70.5', '69.07', '129967.016', '-1.43', '-2690.79'],
  [47, '050135', '杉木锯材', '', 'm3', '23.6996', '1870', '1870', '44318.252', '0', '0'],
  [48, '050146', '松木锯材', '', 'm3', '0.009', '1816.55', '2303.3', '20.73', '486.75', '4.381'],
  [49, '050212', '竹脚手板(侧编)', '', 'm2', '62.471', '21', '32.16', '2009.067', '11.16', '697.176'],
  [50, '110002', '107胶', '', 'kg', '474.3789', '2', '2', '948.758', '0', '0'],
  [51, '110033', '建筑油膏', '', 'kg', '120.3678', '5.74', '3.8', '457.398', '-1.94', '-233.514'],
  [52, '110109', '调和漆', '', 'kg', '12.12', '16', '16', '193.92', '0', '0'],
  [53, '110120', '防锈漆', '', 'kg', '50.12', '12', '14.5', '726.74', '2.5', '125.3'],
  [54, '110211', '油漆溶剂油', '', 'kg', '5.6385', '4.04', '4.04', '22.78', '0', '0'],
  [55, '120206', '石油沥青', '30#', 'kg', '6985.832', '5.4', '4.178', '29186.806', '-1.222', '-8536.687'],
  [56, '120211', '石油沥青油毡', '350#', 'm2', '1373.2648', '2.87', '3.34', '4586.704', '0.47', '645.434'],
  [57, '140082', '钢管', 'φ48*3.5', 'kg', '581.034', '5', '5.006', '2908.656', '0.006', '3.486'],
  [58, '320030', '对接扣件(单个1.4kg)', '', '个', '16.289', '6.35', '6.35', '103.435', '0', '0'],
  [59, '320094', '零星卡具', '', 'kg', '740.7873', '5.8', '5.8', '4296.566', '0', '0'],
  [60, '320099', '模板木材', '', 'm3', '7.5838', '1843.28', '1843.28', '13979.067', '0', '0'],
  [61, '320176', '支撑钢管及扣件', '', 'kg', '12584.4177', '4.77', '7.097', '89311.612', '2.327', '29283.94'],
  [62, '320189', '直角扣件(单个1.4kg)', '', '个', '115.7235', '7', '7', '810.065', '0', '0'],
  [63, '320194', '组合钢模板', '', 'kg', '1.0873', '4.8', '7.801', '8.482', '3.001', '3.263'],
];
const boldPrices = new Set([41, 43, 44, 46, 52, 53, 63]);
const timber = new Set([47, 48]);
const gridCols: [string, number][] = [
  ['', 21], ['编码', 101], ['类别', 41], ['名称', 135], ['规格型号', 94], ['单位', 40], ['数量', 67], ['预算价', 64],
  ['市场价', 68], ['市场价合计', 79], ['价差', 67], ['价差合计', 74], ['供货方式', 65], ['甲供数量', 69], ['市场价锁定', 65],
  ['输出标记', 65], ['三材类别', 65], ['三材系数', 73], ['产地', 84], ['厂家', 77], ['是否暂估', 65], ['二次分析', 65],
  ['直接修改单价', 81], ['质量等级', 81],
];

const tree: [number, string][] = [
  [1, '土建工程'], [2, '地下室'], [3, '建筑工程'], [3, '装饰工程'], [2, '独立商业'], [3, '建筑工程'], [3, '装饰工程'],
  [2, '南塔商业'], [3, '建筑工程'], [3, '装饰工程'], [2, '北塔商业'], [3, '建筑工程'], [3, '装饰工程'], [2, '南塔'], [3, '建筑工程'],
];
const subTables = ['人工表', '材料表', '机械表', '设备表', '主材表'];
const otherTables = ['分部分项人材机', '措施项目人材机', '发包人供应材料和设备', '主要材料指标表', '承包人主要材料和设备', '主要材料表', '暂估材料表'];

const prices = [
  ['木模板', '2440*1220*12', '28.92'],
  ['木模板', '2440*1220*15', '31.18'],
  ['竹模板', '2440*1220*10', '46.01'],
  ['竹模板（双面腹膜）', '2440*1220*15', '69.07'],
];
const priceCols: [string, number][] = [
  ['序号', 64], ['材料名称', 145], ['规格型号', 145], ['单位', 45], ['含税市场价', 80], ['税率', 50], ['历史价', 45], ['报价时间', 80], ['备注', 145],
];
const cats = ['（3）大灌木 地径在离地面10公分处计量', '（4）灌木球', '（5）小灌木', '（6）竹类', '（9）草类', '（8）草本植物'];

const MaterialRow = ({ r }: { r: Row }) => {
  const [no, code, name, spec, unit, qty, budget, price, total, diff, diffTotal] = r;
  const y = ![45, 47, 50, 52, 54, 58, 59, 60, 62].includes(no);
  const neg = diff.startsWith('-');
  return (
    <tr style={no === 46 ? { height: 29 } : undefined}>
      <RowNo scope="row" $on={no === 45}>{no}</RowNo>
      <Td $y={y}>{code}</Td>
      <Td $y={y} $a="c">材</Td>
      <Td $y={y}>{name}</Td>
      <Td $y={y}>{spec}</Td>
      <Td $y={y} $a="c">{unit}</Td>
      <Td $y={y} $a="r">{qty}</Td>
      <Td $y={y} $a="r">{budget}</Td>
      <Td $y={y} $a="r" $bold={boldPrices.has(no)} $sel={no === 45}>{price}</Td>
      <Td $y={y} $a="r">{total}</Td>
      <Td $y={y} $a="r" $neg={neg}>{diff}</Td>
      <Td $y={y} $a="r" $neg={neg}>{diffTotal}</Td>
      <Td $y={y} $a="c">自行采购</Td>
      <Td $y={y} $a="r">0</Td>
      <Td $y={y}><Tick $dark aria-label={`${name} 市场价锁定`} /></Td>
      <Td $y={y}><Tick $dark defaultChecked aria-label={`${name} 输出标记`} /></Td>
      <Td $y={y} $a="c">{timber.has(no) ? '木材' : ''}</Td>
      <Td $y={y} $a="r">{timber.has(no) ? 1 : 0}</Td>
      <Td $y={y} />
      <Td $y={y} />
      <Td $y={y}><Tick $dark aria-label={`${name} 是否暂估`} /></Td>
      <Td $y={y} />
      <Td $y={y} />
      <Td $y={y} />
      <Td $y={y} />
    </tr>
  );
};

const TreeH = styled(HScroll)`padding-right: 4px;`;

const SideColumn = () => (
  <Side>
    <SideTabs>
      <SideTab $on>项目结构</SideTab>
      <SideTab>查询</SideTab>
    </SideTabs>
    <SideHead>
      <SideTitle>项目结构</SideTitle>
      <SquareBtn $off aria-label="上移">{I.upPale}</SquareBtn>
      <SquareBtn aria-label="下移">{I.down}</SquareBtn>
      <SquareBtn aria-label="收起">{I.dblUp}</SquareBtn>
    </SideHead>
    <TreePane>
      <Tree>
        {tree.map(([lv, label], i) => (
          <TreeRow key={i} $on={i === 5}>
            {lv === 1 && <Guide $w={4} $h />}
            {lv === 2 && <><Guide $w={10} /><Guide $w={4} $h /></>}
            {lv === 3 && <><Guide $w={10} /><Guide $w={10} /><Guide $w={17} $h $half={tree[i + 1]?.[0] === 2} /></>}
            {lv < 3 && <Fold aria-label={`折叠 ${label}`} />}
            <TreeLabel>{label}</TreeLabel>
          </TreeRow>
        ))}
      </Tree>
      <VScroll>
        <ScrollEnd $col><Chevron dir="up" /><Thumb /></ScrollEnd>
        <Chevron dir="down" />
      </VScroll>
      <TreeH>
        <ScrollEnd><Chevron dir="left" /><Thumb /></ScrollEnd>
        <Chevron dir="right" />
      </TreeH>
    </TreePane>
    <Lower>
      <LowerTitle>人材机汇总</LowerTitle>
      <LowerTools>
        <TextBtn>新建</TextBtn>
        <TextBtn $dim>删除</TextBtn>
        <TextBtn aria-label="上移">{I.upGray}</TextBtn>
        <TextBtn aria-label="下移">{I.downGray}</TextBtn>
      </LowerTools>
      <LowerTree>
        <LowerRow>
          <ChevronSlot><Chevron dir="down" /></ChevronSlot>
          <LowerLabel $on>所有人材机</LowerLabel>
        </LowerRow>
        {subTables.map((t, i) => (
          <LowerRow key={t}><Dots $w={19} /><Dots $w={9} $h $half={i === 4} /><LowerLabel>{t}</LowerLabel></LowerRow>
        ))}
        {otherTables.map((t, i) => (
          <LowerRow key={t}><Dots $w={9} $h $half={i === 6} /><LowerLabel>{t}</LowerLabel></LowerRow>
        ))}
      </LowerTree>
    </Lower>
  </Side>
);

const ServicePanel = () => (
  <Service>
    <Banner>
      {I.brick}
      <Brand>广材信息服务</Brand>
      <BigBtn>批量载价</BigBtn>
      <BigBtn>价格指数</BigBtn>
      <BigBtn>{I.bag}工具箱</BigBtn>
      <Slogan>专业、易用的材料载价查询工具!</Slogan>
    </Banner>
    <NavBar>
      {I.gcLogo}
      <Product>广材助手<Caret /></Product>
      <Expiry>数据包2023.10.26到期</Expiry>
      <NavItem>全部类型</NavItem>
      <NavItem $on>信息价</NavItem>
      {['专业测定价', '广材网市场价', '供应商价格', '企业材料库', '人工询价'].map((t) => <NavItem key={t}>{t}</NavItem>)}
      <NavItem>价格趋势<RedDot /></NavItem>
      <NavRight>
        <NavDrop>购买<Caret /></NavDrop>
        <NavDrop>帮助<Caret /></NavDrop>
        <AvatarBtn aria-label="账户">{I.avatar}</AvatarBtn>
      </NavRight>
    </NavBar>
    <FilterBar>
      <FieldLabel htmlFor="area">地区</FieldLabel>
      <SelectBox $w={80}><Select id="area"><option>长沙</option></Select></SelectBox>
      <FieldLabel htmlFor="period">期数</FieldLabel>
      <SelectBox $w={100}><Select id="period"><option>2019年10月</option></Select></SelectBox>
      <FlatBtn>更新时间</FlatBtn>
      <FlatBtn>本期说明</FlatBtn>
      <FlatBtn $on>结算调差</FlatBtn>
      <LockToggle aria-label="锁定查询">{I.lock}{I.unlock}</LockToggle>
      <SearchBox onSubmit={(e) => e.preventDefault()}>
        <SearchInput aria-label="搜索材料" placeholder="模板锯材" />
        <SearchBtn aria-label="搜索">{I.search}</SearchBtn>
      </SearchBox>
    </FilterBar>
    <Split>
      <Cats>
        <CatHead>所有材料类别</CatHead>
        <CatBody>
          <ul>
            {['长沙市预算价格', '长沙市建筑工程材料市场价格'].map((t) => (
              <CatRow key={t}><Plus aria-label={`展开 ${t}`} /><CatText>{t}</CatText></CatRow>
            ))}
            {cats.map((t) => <CatRow key={t}>{I.file}<CatText>{t}</CatText></CatRow>)}
          </ul>
          <CatThumb />
        </CatBody>
      </Cats>
      <MidBar><Collapse aria-label="收起类别" /></MidBar>
      <Results>
        <ResultTabs>
          <ResultTab $on>显示本期价格</ResultTab>
          <ResultTab>显示平均价</ResultTab>
        </ResultTabs>
        <ResultBody>
          <PriceTable>
            <colgroup>{priceCols.map(([t, w]) => <col key={t} style={{ width: w }} />)}</colgroup>
            <thead><tr>{priceCols.map(([t]) => <PTh key={t} scope="col">{t}</PTh>)}</tr></thead>
            <tbody>
              {prices.map(([name, spec, price], i) => (
                <tr key={i}>
                  <PTd $left><NumCell><Badge>信</Badge>{i + 1}</NumCell></PTd>
                  <PTd $left>{name}</PTd>
                  <PTd $left>{spec}</PTd>
                  <PTd>m2</PTd>
                  <PTd>{price}</PTd>
                  <PTd>12.95<br />%</PTd>
                  <PTd><IconBox aria-label="历史价">{I.chart}</IconBox></PTd>
                  <PTd>2019-10-15</PTd>
                  <PTd $left>长沙</PTd>
                </tr>
              ))}
            </tbody>
          </PriceTable>
        </ResultBody>
        <Related>
          <Badge $orange>专</Badge><span>专业测定价有 1 条关联价格</span><More href="#">点击查看</More>
          <Badge $orange>市</Badge><span>市场价有 22 条关联价格</span><More href="#">点击查看</More>
        </Related>
      </Results>
    </Split>
  </Service>
);

const iconRow = (names: string[]) => names.map((n) => <IconBtn key={n} aria-label={n}>{I[n]}</IconBtn>);

export default function App() {
  return (
    <Page>
      <Global />
      <TitleBar>
        <TitleText>广联达计价软件 GBQ4.0 - [招标管理 - 项目结构:湖南万润·璞瑅时光项目建设工程施工总承包【二审】 - E:\【唐 】\万润\计价\2023.9.23\时光项目二审初步结果\湖南万润·璞瑅时光项目建设工程施工总承包【二审土建】.GZB4]</TitleText>
        <WinButtons>
          <WinButton aria-label="最小化"><Svg w={10} h={14}><path d="M0 1.500h10" stroke="#000" /></Svg></WinButton>
          <WinButton aria-label="还原"><Svg w={10} h={14}><path d="M.5-3h7v8.500h-7zM7.500 3h2v-6" fill="none" stroke="#000" /></Svg></WinButton>
          <WinButton aria-label="关闭"><Svg w={10} h={14}><path d="M0-4l10 10M10-4L0 6" stroke="#000" /></Svg></WinButton>
        </WinButtons>
      </TitleBar>
      <MenuBar>
        <MenuLogo>{I.app}</MenuLogo>
        {['文件(F)', '编辑(E)', '视图(V)', '项目(P)', '招投标(Z)', '造价指标', '导入导出(D)', '维护(D)', '系统(S)', '窗口(W)', '在线服务(L)'].map((t) => (
          <MenuItem key={t}>{t}</MenuItem>
        ))}
        <MenuItem $gap>{I.help}帮助(H)</MenuItem>
        <MenuItem $gap>{I.owl}联系客服</MenuItem>
        <MenuItem $gap>{I.audit}转入审核</MenuItem>
        <MenuItem $gap>{I.pay}计量支付</MenuItem>
        <MenuItem>工期定额</MenuItem>
        <Spacer />
        <MenuItem aria-label="子窗口最小化"><Svg w={5} h={12}><path d="M0 10h5" stroke="#000" strokeWidth="2" /></Svg></MenuItem>
        <MenuItem aria-label="子窗口还原"><Svg w={20} h={12}><path d="M.5 5.500h6v5h-6zM3 4.500V1.500h6v5H7" fill="none" stroke="#000" /><path d="M0 5h7M3 1.500h6" stroke="#000" strokeWidth="2" /></Svg></MenuItem>
      </MenuBar>
      <Toolbar>
        <ToolGroup $bleed>
          {iconRow(['newFile', 'book', 'open'])}<Caret />
          {iconRow(['save', 'folderUp'])}<Grip />
          {iconRow(['cut', 'copy', 'paste', 'del'])}<Sep />
          {iconRow(['undo'])}<Caret $dim />
          {iconRow(['redo'])}<Caret $dim />
        </ToolGroup>
        <ToolGroup>
          <Grip />
          <LabelBtn $tight>{I.check}符合性检查</LabelBtn>
          <LabelBtn $tight>{I.gear}预算书设置</LabelBtn>
          <Sep />
          <LabelBtn $tight $on>{I.props}属性窗口</LabelBtn>
          <Sep />
          <LabelBtn>{I.sigma}局部汇总</LabelBtn>
          <LabelBtn>{I.cost}费用查看</LabelBtn>
          <LabelBtn>统一设置费率</LabelBtn>
          <LabelBtn>{I.report}报表</LabelBtn>
        </ToolGroup>
        <ToolGroup><Grip />{iconRow(['first', 'prev', 'next', 'last'])}</ToolGroup>
        <ToolGroup><Grip />{iconRow(['left', 'right', 'up', 'down'])}</ToolGroup>
        <ToolGroup>
          <Grip />
          {iconRow(['calc'])}
          <IconBtn aria-label="函数"><Glyph $italic>fx</Glyph></IconBtn>
          <IconBtn aria-label="段落"><Glyph>¶</Glyph></IconBtn>
          {iconRow(['cube', 'find', 'list'])}
        </ToolGroup>
      </Toolbar>
      <Workspace>
        <SideColumn />
        <Splitter><VGrip /></Splitter>
        <Main>
          <Tabs>
            {['造价分析', '工程概况', '分部分项', '措施项目', '其他项目', '人材机汇总', '费用汇总'].map((t) => (
              <Tab key={t} $on={t === '人材机汇总'}>{t}</Tab>
            ))}
          </Tabs>
          <SubBar>
            <ToolGroup>
              {iconRow(['binoc'])}
              <LabelBtn>{I.magnify}显示对应子目</LabelBtn>
              <Sep />
              <LabelBtn>{I.load}载价</LabelBtn><Caret />
              <LabelBtn>{I.archive}市场价存档</LabelBtn><Caret />
              <LabelBtn>{I.adjust}调整市场价系数</LabelBtn>
              <Sep />
              <LabelBtn $dim>{I.lockA}锁定材料表</LabelBtn>
              <Sep />
              <LabelBtn>其他</LabelBtn><Caret />
              <Sep />
              <CheckLabel><Tick />只显示输出材料</CheckLabel>
              <CheckLabel><Tick />只显示有价差材料</CheckLabel>
              <Sep />
              <span>价格文件:</span>
            </ToolGroup>
          </SubBar>
          <Summary>
            <SumCell>市场价合计：8616830.53</SumCell>
            <SumCell>价差合计：1153482.42</SumCell>
          </Summary>
          <GridPane>
            <GridView>
              <Grid>
                <colgroup>
                  {gridCols.map(([t, w]) => <col key={t} style={{ width: w }} />)}
                  <col />
                </colgroup>
                <thead>
                  <tr>
                    {gridCols.map(([t]) => <Th key={t} scope="col" $on={t === '市场价'}>{t}</Th>)}
                    <Th />
                  </tr>
                </thead>
                <tbody>{rows.map((r) => <MaterialRow key={r[0]} r={r} />)}</tbody>
              </Grid>
            </GridView>
            <GridV><GridThumb /></GridV>
            <GridH>
              <ScrollEnd><Chevron dir="left" /><Thumb /></ScrollEnd>
              <Chevron dir="right" />
            </GridH>
          </GridPane>
          <HGripRow><HGrip /></HGripRow>
          <DockTabs><DockTab>广材助手</DockTab><DockEdge /></DockTabs>
          <ServicePanel />
          <EdgeHandle />
          <Marks width="1300" height="460" viewBox="0 0 1300 460" aria-hidden="true">
            <path d="M642 172L659 161 657 166 1270 112V114L658 174 659 180z" fill="#ff2213" />
            <path d="M636 231L654 228 651 232 1268 443V445L649 239 648 244z" fill="#ff2213" />
          </Marks>
        </Main>
      </Workspace>
      <Status>
        <StatusCell><Bleed>清单库：工程量清单项目计量规范(2013-湖南)</Bleed></StatusCell>
        <StatusCell>定额库：湖南省建筑工程消耗量标准(2014)</StatusCell>
        <StatusCell>定额专业：建筑工程</StatusCell>
        <StatusCell>当前分部：屋面及防水工程</StatusCell>
        <StatusCell>计税模式：增值税(简易计税方法)</StatusCell>
      </Status>
      <Ime>
        <ImeClose aria-label="关闭输入法栏">×</ImeClose>
        <ImeLogo>S</ImeLogo>
        <ImeMode>中</ImeMode>
        {I.moon}{I.punct}{I.kbd}{I.person}{I.shirt}{I.wrench}
      </Ime>
    </Page>
  );
}
